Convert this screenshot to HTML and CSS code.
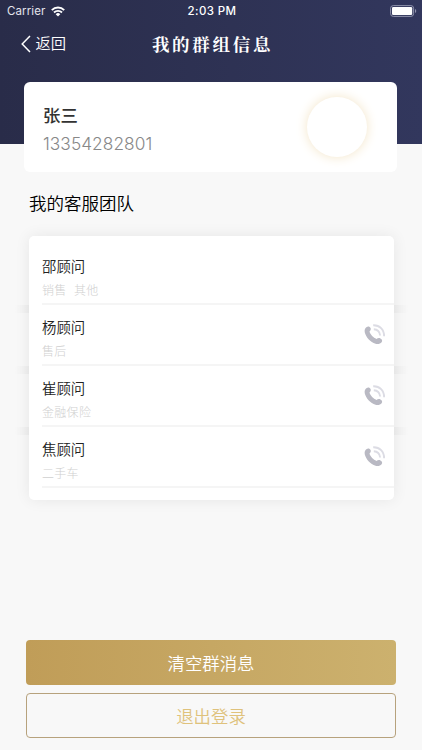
FILE: index.html
```
<!DOCTYPE html>
<html lang="zh-CN">
<head>
<meta charset="utf-8">
<title>我的群组信息</title>
<link rel="stylesheet" href="styles.css">
</head>
<body>
<svg class="defs" width="0" height="0" aria-hidden="true">
  <symbol id="phone" viewBox="0 0 22 22">
    <path d="M2.700 3C4 2 6 2.500 6.600 4c.5 1.500-.1 2.700-1.100 3.600.8 3 3.800 6.200 7 7.400 1-.8 2.500-1.300 3.900-.6 1.900.9 2.200 2.600 1.200 3.900-1.400 1.800-4.200 2.200-6.700 1.200C6.200 17.700 2.100 13.400.8 8.400.3 6 .9 4.200 2.700 3Z" fill="#b9b9c3"/>
    <path d="M9.800 5.300c3.400.2 5.900 2.600 6.300 6.200M9.200 1.300c6.400-.3 11 4.300 10.900 11" fill="none" stroke="#dcdce4" stroke-width="1.900"/>
  </symbol>
</svg>
<div class="screen">
  <header class="header">
    <div class="status">
      <div class="carrier"><span>Carrier</span>
        <svg width="14" height="11" viewBox="0 0 14 11"><path d="M.8 4.100a8.800 8.800 0 0 1 12.400 0M3 6.500a5.700 5.700 0 0 1 8 0" fill="none" stroke="#fff" stroke-width="1.900"/><path d="M4.700 8.200a3.300 3.300 0 0 1 4.600 0L7 10.600Z" fill="#fff"/></svg>
      </div>
      <div class="time">2:03 PM</div>
      <svg class="battery" width="27" height="12" viewBox="0 0 27 12"><rect x=".6" y=".6" width="23" height="10.800" rx="2.700" fill="none" stroke="#9093ad"/><rect x="2" y="2" width="20.200" height="8" rx="1.300" fill="#fff"/><path d="M25 4v4c1.700-.6 1.700-3.400 0-4Z" fill="#9093ad"/></svg>
    </div>
    <nav class="nav">
      <div class="back"><svg width="10" height="18" viewBox="0 0 10 18"><path d="M9 1 1.200 9 9 17" fill="none" stroke="#fff" stroke-width="1.500"/></svg><span>返回</span></div>
      <h1 class="title">我的群组信息</h1>
    </nav>
  </header>
  <section class="profile">
    <div>
      <div class="name">张三</div>
      <div class="number">13354282801</div>
    </div>
    <div class="avatar"></div>
  </section>
  <h2 class="heading">我的客服团队</h2>
  <section class="team">
    <div class="row"><div><div class="member">邵顾问</div><div class="role">销售&nbsp; 其他</div></div></div>
    <div class="row"><div><div class="member">杨顾问</div><div class="role">售后</div></div><svg class="call"><use href="#phone"/></svg></div>
    <div class="row"><div><div class="member">崔顾问</div><div class="role">金融保险</div></div><svg class="call"><use href="#phone"/></svg></div>
    <div class="row"><div><div class="member">焦顾问</div><div class="role">二手车</div></div><svg class="call"><use href="#phone"/></svg></div>
  </section>
  <footer class="actions">
    <button class="btn clear">清空群消息</button>
    <button class="btn logout">退出登录</button>
  </footer>
</div>
</body>
</html>
```
FILE: styles.css
```
* { box-sizing: border-box; }
body { margin: 0; font-family: Inter, "Noto Sans CJK SC", sans-serif; }
h1, h2 { margin: 0; }
svg { display: block; flex: none; }
.defs { position: absolute; }
.screen { width: 422px; height: 750px; background: #f8f8f8; display: flex; flex-direction: column; overflow: hidden; }
.header { height: 144px; flex: none; background: linear-gradient(90deg, #292c49, #32375d); color: #fff; }
.status { height: 22px; display: grid; grid-template-columns: 1fr auto 1fr; align-items: center; padding: 0 5px 0 7px; font-size: 11.5px; line-height: 22px; }
.carrier { display: flex; align-items: center; gap: 6px; color: #e4e4ec; letter-spacing: .1px; }
.time { font-weight: 500; letter-spacing: .4px; }
.battery { justify-self: end; }
.nav { height: 44px; display: grid; grid-template-columns: 1fr auto 1fr; align-items: center; padding: 0 20px 0 21px; }
.back { display: flex; align-items: center; gap: 4.5px; font-size: 15.3px; font-weight: 350; line-height: 20px; }
.title { font-family: "Noto Serif CJK SC", "Noto Sans CJK SC", serif; font-size: 17.5px; font-weight: 700; letter-spacing: 2.7px; line-height: 24px; padding-left: 2px; }
.profile { flex: none; width: 373px; height: 90px; margin: -62px 0 0 24px; background: #fff; border-radius: 6px; display: flex; justify-content: space-between; align-items: center; padding: 0 30px 0 19px; }
.name { font-size: 17.4px; font-weight: 500; line-height: 26px; color: #333; margin-top: 6px; }
.number { font-size: 17.3px; font-weight: 300; line-height: 26px; color: #888; margin-top: 2px; letter-spacing: .05px; }
.avatar { width: 60px; height: 60px; border-radius: 50%; background: #fff; box-shadow: 0 0 12px #f3e5c8; }
.heading { font-size: 17.5px; font-weight: 350; line-height: 26px; color: #000; margin: 19px 0 0 29px; }
.team { flex: none; width: 365px; height: 264px; margin: 19px 0 0 29px; padding: 8px 0 0 13px; background: #fff; border-radius: 5px; box-shadow: 0 0 15px rgba(0, 0, 0, .075); }
.row { position: relative; height: 61px; border-bottom: 2px solid #f5f5f5; display: flex; justify-content: space-between; align-items: center; padding: 7px 8px 0 0; }
.row:not(:last-child)::before, .row:not(:last-child)::after { content: ""; position: absolute; top: 61px; width: 15px; height: 8px; }
.row::before { left: -28px; background: linear-gradient(90deg, transparent, rgba(0, 0, 0, .035)); }
.row::after { right: -15px; background: linear-gradient(270deg, transparent, rgba(0, 0, 0, .035)); }
.member { font-size: 14.4px; font-weight: 350; line-height: 20px; margin-top: 3px; color: #222; }
.role { font-size: 12px; font-weight: 300; line-height: 20px; margin-top: 4px; letter-spacing: .3px; color: #d0d0d0; }
.call { width: 22px; height: 22px; margin-top: -6px; }
.actions { margin: auto 26px 12px; display: flex; flex-direction: column; gap: 8px; }
.btn { height: 45px; border: 0; border-radius: 4px; padding: 0; font: 350 17.4px/24px "Noto Sans CJK SC", sans-serif; }
.clear { background: linear-gradient(90deg, #c09d58, #ccb16e); color: #fff; }
.logout { background: transparent; border: 1px solid #b7a27d; color: #dfc27c; }
```
